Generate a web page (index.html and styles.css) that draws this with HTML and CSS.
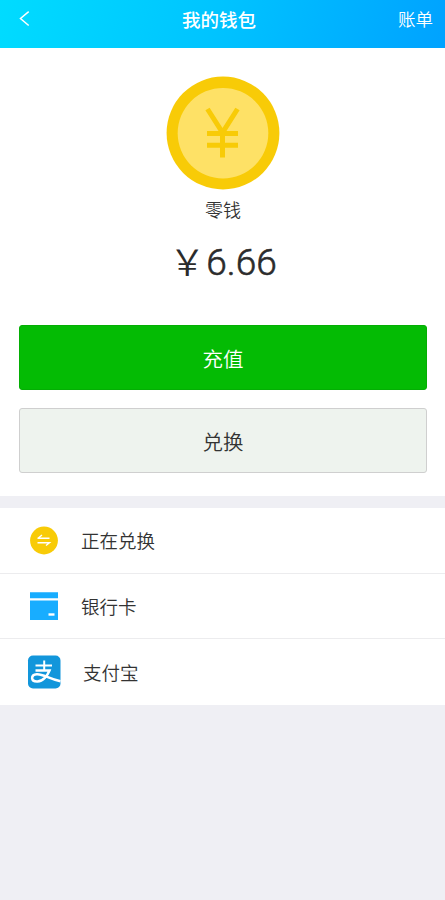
FILE: index.html
```html
<!DOCTYPE html>
<html lang="zh-CN">
<head>
<meta charset="utf-8">
<title>我的钱包</title>
<link rel="stylesheet" href="styles.css">
</head>
<body>
<header class="header">
  <svg class="back" width="12" height="18" viewBox="0 0 12 18"><path d="M9.700 1.700 1.500 8.500l8.200 7"/></svg>
  <h1 class="title">我的钱包</h1>
  <span class="bill">账单</span>
</header>
<main>
  <section class="balance">
    <svg class="coin" width="114" height="114" viewBox="0 0 114 114">
      <circle cx="57" cy="57" r="56.400" fill="#f8cb07"/>
      <circle cx="57" cy="57.200" r="45.300" fill="#fee166"/>
      <path d="M41.500 33 56.500 56.500 71.500 33M41 57.500H72M41 69.300H72M56.500 56V81.500" fill="none" stroke="#f8cb07" stroke-width="5"/>
    </svg>
    <div class="label">零钱</div>
    <div class="amount"><span class="yen">￥</span><span class="digits">6.66</span></div>
    <button class="btn primary">充值</button>
    <button class="btn secondary">兑换</button>
  </section>
  <nav class="list">
    <div class="row">
      <svg class="icon" width="34" height="34" viewBox="0 0 34 34">
        <circle cx="17" cy="17.500" r="13.900" fill="#f8cb07"/>
        <path d="M10.500 15.300H22.500M11 15.300 15 12M10.500 19.700H22.500L19 22.500" fill="none" stroke="#fff" stroke-width="1.400"/>
      </svg>
      <span>正在兑换</span>
    </div>
    <div class="row">
      <svg class="icon" width="34" height="34" viewBox="0 0 34 34">
        <path d="M3 3.300H31V9.300H3zM3 11.500H31V31H3z" fill="#18adff"/>
        <path d="M21.500 25.500H27.500" stroke="#fff" stroke-width="2.400"/>
      </svg>
      <span>银行卡</span>
    </div>
    <div class="row alipay">
      <svg class="icon" width="34" height="34" viewBox="0 0 34 34">
        <rect x="1" y=".6" width="32.500" height="32.800" rx="5" fill="#1296db"/>
        <path d="M8.500 10.500H25M17.200 5.500V15" fill="none" stroke="#fff" stroke-width="2"/>
        <path d="M8.500 15.500H22.500C20.500 20.500 16 26.200 10.500 26.500 3.500 26.800 3.400 19.800 9.800 19.200 16 18.700 22 24 33.500 26.200" fill="none" stroke="#fff" stroke-width="2.500"/>
      </svg>
      <span>支付宝</span>
    </div>
  </nav>
</main>
</body>
</html>
```
FILE: styles.css
```css
* { box-sizing: border-box; }
body {
  margin: 0;
  min-height: 900px;
  background: #efeff4;
  color: #333;
  font-family: "Noto Sans CJK SC", sans-serif;
  font-weight: 350;
}
.header {
  display: grid;
  grid-template-columns: 163px auto 1fr;
  align-items: center;
  height: 48px;
  padding: 0 12px 10px 19px;
  background: linear-gradient(105deg, #00dcff 0%, #00c4ff 48%, #00a2ff 100%);
  color: #fff;
}
.back { fill: none; stroke: #fff; stroke-width: 1.5; }
.title { margin: 0; font-size: 18.5px; line-height: 28px; font-weight: 500; }
.bill { justify-self: end; font-size: 17.5px; line-height: 28px; }
.balance {
  display: flex;
  flex-direction: column;
  align-items: center;
  height: 448px;
  padding: 28px 18px 0 19px;
  background: #fff;
}
.coin { flex: none; }
.label { margin-top: 5px; font-size: 18px; line-height: 28px; }
.amount {
  display: flex;
  align-items: center;
  margin: 15px 0 0 0;
  height: 50px;
  color: #2b2b2b;
}
.yen { font-size: 36px; line-height: 50px; margin-top: -6px; }
.digits {
  margin-left: 1px;
  font: 300 37px/50px Roboto, sans-serif;
  -webkit-text-stroke: .6px #2b2b2b;
}
.btn {
  width: 100%;
  height: 65px;
  border: 1px solid #04ae04;
  border-radius: 3px;
  padding: 0;
  font: inherit;
  font-size: 20.5px;
}
.primary { margin-top: 37px; background: #04bb04; color: #fff; }
.secondary { margin-top: 18px; background: #eef3ee; border-color: #cfcfcf; color: #333; }
.list { margin-top: 12px; background: #fff; }
.row {
  display: flex;
  align-items: center;
  gap: 20px;
  height: 65.5px;
  padding-left: 27px;
  border-bottom: 1px solid #ececee;
  font-size: 18.5px;
  line-height: 28px;
}
.alipay { gap: 22px; border-bottom: 0; }
.icon { flex: none; }
```
